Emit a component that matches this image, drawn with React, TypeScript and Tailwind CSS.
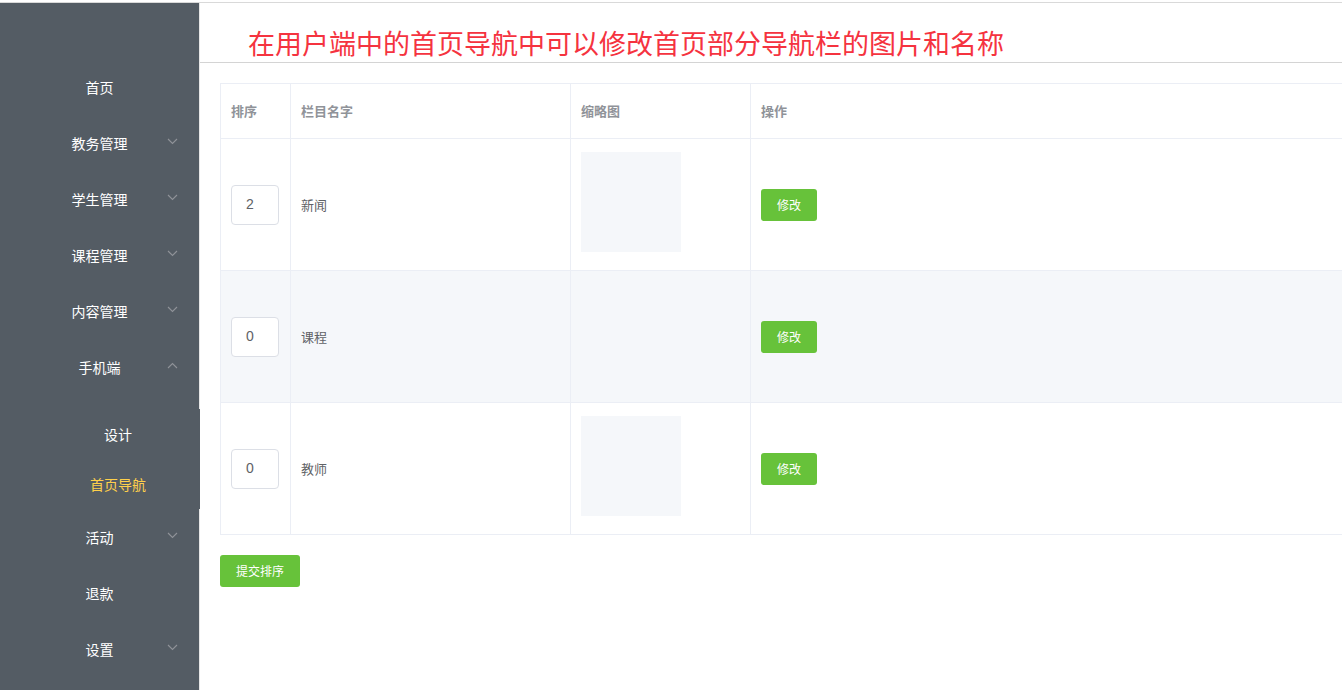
import React from "react";

const font = { fontFamily: '"Noto Sans CJK SC", "Liberation Sans", sans-serif' };

function Chevron({ up = false }: { up?: boolean }) {
  return (
    <svg width="11" height="7" viewBox="0 0 11 7" className="absolute right-[21px] top-[23px]">
      <polyline
        points={up ? "1,6 5.5,1.5 10,6" : "1,1 5.5,5.5 10,1"}
        fill="none"
        stroke="#909399"
        strokeWidth="1.1"
      />
    </svg>
  );
}

function MenuItem({ label, arrow, up }: { label: string; arrow?: boolean; up?: boolean }) {
  return (
    <div className="relative h-[56px] flex items-center justify-center text-[14px] text-white">
      <span>{label}</span>
      {arrow && <Chevron up={up} />}
    </div>
  );
}

const rows = [
  { order: "2", name: "新闻", thumb: true, striped: false },
  { order: "0", name: "课程", thumb: false, striped: true },
  { order: "0", name: "教师", thumb: true, striped: false },
];

export default function App() {
  return (
    <div className="w-[1342px] h-[690px] overflow-hidden bg-white" style={font}>
      <div className="h-[3px] border-b border-[#d9d9d9]" />
      <div className="flex h-[687px]">
        <aside className="w-[200px] shrink-0 bg-[#545c64] border-r border-[#e6e6e6] pt-[56px]">
          <MenuItem label="首页" />
          <MenuItem label="教务管理" arrow />
          <MenuItem label="学生管理" arrow />
          <MenuItem label="课程管理" arrow />
          <MenuItem label="内容管理" arrow />
          <MenuItem label="手机端" arrow up />
          <div className="h-[14px]" />
          <div className="w-[200px] bg-[#545c64] relative">
            <div className="h-[50px] flex items-center justify-center pl-[36px] text-[14px] text-white">设计</div>
            <div className="h-[50px] flex items-center justify-center pl-[36px] text-[14px] text-[#ffd04b]">首页导航</div>
          </div>
          <MenuItem label="活动" arrow />
          <MenuItem label="退款" />
          <MenuItem label="设置" arrow />
        </aside>
        <main className="flex-1 min-w-0">
          <div className="h-[60px] border-b border-[#d4d4d4] pl-[48px] pt-[22px]">
            <h1 className="text-[27px] leading-[36px] text-[#f5333f] whitespace-nowrap">
              在用户端中的首页导航中可以修改首页部分导航栏的图片和名称
            </h1>
          </div>
          <div className="pl-[20px] pt-[20px]">
            <table className="w-[1200px] border-collapse table-fixed text-[13px]">
              <colgroup>
                <col className="w-[70px]" />
                <col className="w-[280px]" />
                <col className="w-[180px]" />
                <col />
              </colgroup>
              <thead>
                <tr className="h-[55px]">
                  {["排序", "栏目名字", "缩略图", "操作"].map((h) => (
                    <th
                      key={h}
                      className="border border-[#ebeef5] px-[10px] text-left font-bold text-[#909399]"
                    >
                      {h}
                    </th>
                  ))}
                </tr>
              </thead>
              <tbody>
                {rows.map((r, i) => (
                  <tr key={i} className={`h-[132px] ${r.striped ? "bg-[#f5f7fa]" : "bg-white"}`}>
                    <td className="border border-[#ebeef5] px-[10px]">
                      <div
                        className="w-[48px] h-[40px] border border-[#dcdfe6] rounded-[4px] bg-white flex items-center pl-[14px] text-[14px] text-[#606266]"
                        style={{ fontFamily: '"Liberation Sans", sans-serif' }}
                      >
                        {r.order}
                      </div>
                    </td>
                    <td className="border border-[#ebeef5] px-[10px] text-[#606266]">{r.name}</td>
                    <td className="border border-[#ebeef5] px-[10px]">
                      {r.thumb && <div className="w-[100px] h-[100px] bg-[#f5f7fa] mb-[6px]" />}
                    </td>
                    <td className="border border-[#ebeef5] px-[10px]">
                      <button className="w-[56px] h-[32px] rounded-[3px] bg-[#67c23a] text-white text-[12px]">
                        修改
                      </button>
                    </td>
                  </tr>
                ))}
              </tbody>
            </table>
            <button className="mt-[20px] w-[80px] h-[32px] rounded-[3px] bg-[#67c23a] text-white text-[12px]">
              提交排序
            </button>
          </div>
        </main>
      </div>
    </div>
  );
}
